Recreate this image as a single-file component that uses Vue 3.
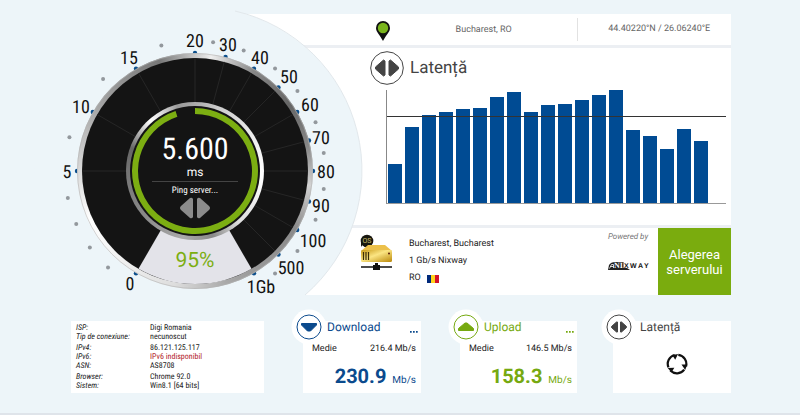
<script setup>
const CX = 195
const CY = 171

function polar(r, deg) {
  const a = (deg * Math.PI) / 180
  return [CX + r * Math.sin(a), CY - r * Math.cos(a)]
}

function sector(r0, r1, a0, a1) {
  const large = a1 - a0 > 180 ? 1 : 0
  const [p, q, s, t] = [polar(r1, a0), polar(r1, a1), polar(r0, a1), polar(r0, a0)]
  return `M${p} A${r1} ${r1} 0 ${large} 1 ${q} L${s} A${r0} ${r0} 0 ${large} 0 ${t} Z`
}

const marks = [
  { text: '0', deg: 210, x: 130, y: 283 },
  { text: '5', deg: 270, x: 67, y: 171 },
  { text: '10', deg: 300, x: 81, y: 106 },
  { text: '15', deg: 330, x: 129, y: 57 },
  { text: '20', deg: 0, x: 195, y: 40 },
  { text: '30', deg: 15, x: 228, y: 44 },
  { text: '40', deg: 30, x: 260, y: 57 },
  { text: '50', deg: 45, x: 289, y: 76 },
  { text: '60', deg: 60, x: 310, y: 104 },
  { text: '70', deg: 75, x: 321, y: 137 },
  { text: '80', deg: 90, x: 326, y: 171 },
  { text: '90', deg: 105, x: 321, y: 205 },
  { text: '100', deg: 120, x: 313, y: 240 },
  { text: '500', deg: 135, x: 291, y: 267 },
  { text: '1Gb', deg: 150, x: 261, y: 286 }
].map((m) => ({ ...m, tick: polar(118, m.deg), a: polar(69, m.deg), b: polar(113, m.deg) }))

const dots = [222, 234, 246, 258, 285, 315, 345, 8, 22, 38, 52, 68, 82, 98, 112, 128, 142].map((d) => polar(130, d))

const samples = [39, 76, 88, 91, 94, 95, 106, 111, 91, 98, 99, 103, 108, 113, 73, 67, 54, 74, 62]

const connection = [
  [['ISP:', 'Digi Romania'], ['Tip de conexiune:', 'necunoscut']],
  [['IPv4:', '86.121.125.117'], ['IPv6:', 'IPv6 indisponibil', true], ['ASN:', 'AS8708']],
  [['Browser:', 'Chrome 92.0'], ['Sistem:', 'Win8.1 [64 bits]']]
]

const results = [
  { kind: 'download', title: 'Download', avg: '216.4 Mb/s', value: '230.9' },
  { kind: 'upload', title: 'Upload', avg: '146.5 Mb/s', value: '158.3' }
]
</script>

<template>
  <main class="page">
    <section class="hero">
      <div class="panels">
        <div class="panel location">
          <svg class="pin" viewBox="0 0 14 20" width="14" height="20" aria-hidden="true">
            <path d="M7 0a7 7 0 0 0-7 7c0 4 4 7 7 13 3-6 7-9 7-13a7 7 0 0 0-7-7z" fill="#111" />
            <circle cx="7" cy="7" r="5.200" fill="#7ab51d" />
          </svg>
          <span class="city">Bucharest, RO</span>
          <span class="coords">44.40220°N / 26.06240°E</span>
        </div>

        <div class="panel latency">
          <header class="latency-head">
            <svg viewBox="0 0 34 34" width="34" height="34" aria-hidden="true">
              <circle cx="17" cy="17" r="16.300" fill="#fff" stroke="#444" />
              <path d="M15 10v14l-1.500 1-8-7v-2l8-7zM19 10v14l1.500 1 8-7v-2l-8-7z" fill="#444" stroke="#444" stroke-linejoin="round" />
            </svg>
            <h2>Latență</h2>
          </header>
          <div class="chart" role="img" aria-label="Latență">
            <span v-for="(h, i) in samples" :key="i" class="bar" :style="{ height: h + 'px' }"></span>
            <span class="average"></span>
          </div>
        </div>

        <div class="panel server">
          <svg class="server-icon" viewBox="0 0 34 38" width="34" height="38" aria-hidden="true">
            <defs>
              <linearGradient id="gold" x1="0" x2="1" y1="0" y2="1">
                <stop offset="0" stop-color="#c99a16" />
                <stop offset=".45" stop-color="#fbe583" />
                <stop offset="1" stop-color="#b98708" />
              </linearGradient>
            </defs>
            <circle cx="7" cy="7" r="6.300" fill="#17170f" />
            <path d="M1 7h4l-4 6z" fill="#17170f" />
            <text x="7" y="9" class="os">OS</text>
            <path d="M8 11h17l7 6H1z" fill="#ecc04a" />
            <rect x="1" y="16" width="31" height="12" rx="1.500" fill="url(#gold)" />
            <path d="M3.500 18v8M6 18v8M8.500 18v8" stroke="#3a2c05" stroke-width="1.200" />
            <circle cx="29" cy="19.500" r="1" fill="#5b1c08" />
            <path d="M1 33h12M20 33h12" stroke="#111" stroke-width="1.700" />
            <path d="M15 29h3v2h2v5h-7v-5h2z" fill="#111" />
          </svg>
          <div class="server-text">
            <span>Bucharest, Bucharest</span>
            <span>1 Gb/s Nixway</span>
            <span class="country">RO
              <svg viewBox="0 0 12 8" width="12" height="8" aria-hidden="true">
                <path d="M0 0h4v8H0z" fill="#00297b" /><path d="M4 0h4v8H4z" fill="#ffd21c" /><path d="M8 0h4v8H8z" fill="#d3122a" />
              </svg>
            </span>
          </div>
          <div class="sponsor">
            <em>Powered by</em>
            <svg viewBox="0 0 42 10" width="42" height="10" role="img" aria-label="Nixway">
              <path d="M1 9 2 4Q4 1 8 1h8.500v6H20l3 2z" fill="#222" />
              <path d="M2.500 7.500 4.500 3.500h2v3.500M3.500 5.500h3" fill="none" stroke="#fff" stroke-width=".8" />
              <text x="7" y="7" class="logo-a">NI</text>
              <text x="17" y="7" class="logo-b">X</text>
              <text x="23" y="7" class="logo-b">W</text>
              <text x="31" y="7" class="logo-b">A</text>
              <text x="37" y="7" class="logo-b">Y</text>
            </svg>
          </div>
          <button type="button" class="choose">Alegerea serverului</button>
        </div>
      </div>

      <svg class="dial" viewBox="34 0 330 300" width="330" height="300" role="img" aria-label="5.600 ms">
        <circle cx="198" cy="171" r="164" fill="#edf5f9" />
        <path d="M235 11A164 164 0 0 1 305 295" fill="none" stroke="#e2e8ec" />
        <g v-for="m in marks" :key="m.text">
          <circle :cx="m.tick[0]" :cy="m.tick[1]" r="2.200" fill="#0c4f8c" />
          <text class="mark" :x="m.x" :y="m.y + 7">{{ m.text }}</text>
        </g>
        <circle v-for="(d, i) in dots" :key="'d' + i" :cx="d[0]" :cy="d[1]" r="2" fill="#93989d" />
        <foreignObject x="77" y="53" width="236" height="236"><div class="ring outer"></div></foreignObject>
        <circle cx="195" cy="171" r="117.500" fill="none" stroke="#b4b4b4" stroke-width=".6" />
        <circle cx="195" cy="171" r="113" fill="#141414" />
        <line v-for="m in marks" :key="'l' + m.text" :x1="m.a[0]" :y1="m.a[1]" :x2="m.b[0]" :y2="m.b[1]" stroke="#262626" />
        <path :d="sector(60, 113, 150, 210)" fill="#e3e3e9" />
        <foreignObject x="126" y="102" width="138" height="138"><div class="ring inner"></div></foreignObject>
        <circle cx="195" cy="171" r="65" fill="#141414" />
        <path :d="sector(57, 63, 0, 342)" fill="#7cae12" />
        <text class="reading" x="195" y="159">5.600</text>
        <text class="unit" x="195" y="176">ms</text>
        <path d="M152 181.500h86" stroke="#444" />
        <text class="status" x="195" y="193">Ping server...</text>
        <path d="M193 199v18q-1 2-3 1l-9-8q-2-2 0-4l9-8q2-1 3 1zM197 199v18q1 2 3 1l9-8q2-2 0-4l-9-8q-2-1-3 1z" fill="#8b8b8b" />
        <text class="percent" x="195" y="267">95%</text>
      </svg>
    </section>

    <section class="cards">
      <div class="card info">
        <table>
          <tbody v-for="(group, g) in connection" :key="g">
            <tr v-for="row in group" :key="row[0]">
              <th scope="row">{{ row[0] }}</th>
              <td :class="{ missing: row[2] }">{{ row[1] }}</td>
            </tr>
          </tbody>
        </table>
      </div>

      <article v-for="r in results" :key="r.kind" class="card result" :class="r.kind">
        <header>
          <svg class="badge" viewBox="0 0 36 36" width="36" height="36" aria-hidden="true">
            <circle cx="18" cy="18" r="17.500" fill="#fff" />
            <circle cx="18" cy="18" r="12" fill="none" stroke="currentColor" />
            <path v-if="r.kind === 'download'" d="M10.500 14.500h15v1.500l-6 6h-3l-6-6z" class="glyph" />
            <path v-else d="M10.500 21.500h15v-2L19 14h-2l-6.500 5.500z" class="glyph" />
          </svg>
          <h3>{{ r.title }}</h3>
          <button type="button" :aria-label="r.title">
            <svg viewBox="0 0 8 2" width="8" height="2"><path d="M0 0h1.700v1.700H0zM3 0h1.700v1.700H3zM6 0h1.700v1.700H6z" fill="currentColor" /></svg>
          </button>
        </header>
        <p class="avg"><span>Medie</span><span>{{ r.avg }}</span></p>
        <p class="speed"><strong>{{ r.value }}</strong><span>Mb/s</span></p>
      </article>

      <article class="card result ping">
        <header>
          <svg class="badge" viewBox="0 0 36 36" width="36" height="36" aria-hidden="true">
            <circle cx="18" cy="18" r="17.500" fill="#fff" />
            <circle cx="18" cy="18" r="12" fill="none" stroke="currentColor" />
            <path d="M16.500 13v10h-1l-5-4.500v-1l5-4.500zM19.500 13v10h1l5-4.500v-1l-5-4.500z" class="glyph" />
          </svg>
          <h3>Latență</h3>
        </header>
        <svg class="spinner" viewBox="0 0 22 22" width="22" height="22" role="img" aria-label="Latență">
          <g v-for="a in [0, 120, 240]" :key="a" :transform="`rotate(${a} 11 11)`">
            <path d="M12.300 1.900A9.200 9.200 0 0 1 20 13.500" fill="none" stroke="#111" stroke-width="2.200" />
            <path d="M15.500 11.500 21.200 11.500 19.200 17z" fill="#111" />
          </g>
        </svg>
      </article>
    </section>
  </main>
</template>

<style>
body {
  background: #edf5f9;
}
</style>

<style scoped>
.page {
  font-family: Roboto, sans-serif;
  text-rendering: geometricPrecision;
  color: #222;
  padding-bottom: 20px;
  border-bottom: 2px solid #dfe4ea;
}
h2, h3, p {
  margin: 0;
  font-weight: 400;
}
button {
  border: 0;
  padding: 0;
  font: inherit;
  background: none;
  color: inherit;
}
.hero {
  display: grid;
  grid-template-columns: minmax(0, 1fr);
  align-items: start;
  padding: 0 69px 0 34px;
}
.hero > * {
  grid-area: 1 / 1;
}
.panels {
  display: flex;
  flex-direction: column;
  gap: 3px;
  margin: 14px 0 0 194px;
  background: #eceff3;
}
.panel {
  background: #fff;
}
.location {
  display: flex;
  align-items: center;
  height: 31px;
  padding-left: 148px;
  font-size: 9px;
  color: #666;
}
.pin {
  margin-top: 2px;
}
.city {
  flex: 188;
  text-align: center;
}
.coords {
  flex: 144;
  padding-left: 9px;
  line-height: 23px;
  text-align: center;
  border-left: 1px solid #e2e2e2;
}
.latency {
  padding: 3px 5px 21px 142px;
}
.latency-head {
  display: flex;
  align-items: center;
  gap: 6px;
  color: #444;
}
.latency-head h2 {
  font-size: 17px;
}
.chart {
  position: relative;
  display: flex;
  align-items: flex-end;
  gap: 3px;
  height: 113px;
  margin: 5px 0 0 16px;
  padding-left: 1px;
  border-left: 1px solid #888;
  border-bottom: 1px solid #999;
}
.bar {
  flex: 0 0 14px;
  background: #004b93;
}
.average {
  position: absolute;
  left: 0;
  right: 0;
  top: 26px;
  height: 1px;
  background: #333;
}
.server {
  display: flex;
  height: 67px;
  padding-left: 132px;
}
.server-icon {
  margin-top: 6px;
}
.server-text {
  display: flex;
  flex-direction: column;
  flex: 1;
  padding: 8px 0 0 15px;
  font-size: 9px;
  line-height: 17px;
}
.country {
  display: flex;
  align-items: center;
  gap: 6px;
}
.sponsor {
  display: flex;
  flex-direction: column;
  align-items: center;
  gap: 19px;
  padding: 3px 9px 0 0;
  font-size: 8px;
  line-height: 11px;
  color: #777;
}
.choose {
  width: 73px;
  background: #7aac0e;
  color: #fff;
  font-size: 13px;
  line-height: 15px;
}
.os {
  font: 7px Roboto, sans-serif;
  fill: #c9bd6a;
  text-anchor: middle;
}
.logo-a {
  font: bold 8px "Liberation Serif", serif;
  fill: #fff;
}
.logo-b {
  font: bold 7px "Liberation Sans", sans-serif;
  fill: #111;
}
.dial text {
  text-anchor: middle;
  font-family: "Roboto Condensed", "Liberation Sans Narrow", Roboto, sans-serif;
}
.dial .mark {
  font-family: "Liberation Sans Narrow", "Roboto Condensed", Roboto, sans-serif;
  font-size: 18px;
  fill: #111;
}
.dial .reading {
  font-size: 30px;
  fill: #fff;
}
.dial .unit {
  font: 12px Roboto, sans-serif;
  fill: #fff;
}
.dial .status {
  font-size: 9px;
  fill: #fff;
}
.dial .percent {
  font: 21px Roboto, sans-serif;
  fill: #7cae12;
}
.ring {
  width: 100%;
  height: 100%;
  border-radius: 50%;
}
.outer {
  background: conic-gradient(#c8c8c8, #eee 8deg, #888 30deg, #666 55deg, #888 78deg, #d2d2d2 97deg, #8a8a8a 120deg, #999 150deg, #aaa 165deg, #ddd 190deg, #eee 215deg, #fff 245deg, #ddd 268deg, #aaa 300deg, #8c8c8c 325deg, #777 342deg, #c8c8c8);
}
.inner {
  background: conic-gradient(#aaa, #ccc 20deg, #eee 60deg, #fff 95deg, #ddd 140deg, #888 165deg, #aaa 190deg, #888 230deg, #777 265deg, #666 290deg, #fff 318deg, #ddd 330deg, #999 345deg, #aaa);
}
.cards {
  display: grid;
  grid-template-columns: 193fr 39px 118fr 39px 117fr 36px 118fr;
  padding: 21px 69px 0 71px;
}
.card {
  background: #fff;
  height: 72px;
  grid-row: 1;
}
.info {
  grid-column: 1;
  padding: 2px 5px;
  box-sizing: border-box;
}
.download {
  grid-column: 3;
  color: #0b4a8d;
}
.upload {
  grid-column: 5;
  color: #76a910;
}
.ping {
  grid-column: 7;
  color: #444;
}
table {
  border-collapse: collapse;
  font: 8px/9px "Roboto Condensed", "Liberation Sans Narrow", Roboto, sans-serif;
}
th, td {
  padding: 0;
  text-align: left;
  font-weight: 400;
}
th {
  width: 74px;
  font-style: italic;
}
tbody + tbody tr:first-child > * {
  padding-top: 2px;
}
.missing {
  color: #b3242b;
}
.result header {
  display: flex;
  align-items: center;
  height: 12px;
  margin-left: -12px;
}
.badge {
  flex: none;
}
.glyph {
  fill: currentColor;
  stroke: currentColor;
  stroke-linejoin: round;
}
.result h3 {
  flex: 1;
  font-size: 12px;
}
.ping h3 {
  padding-left: 3px;
}
.result header button {
  display: flex;
  padding: 9px 3px 0 0;
}
.avg {
  display: flex;
  justify-content: space-between;
  padding: 9px 5px 0 9px;
  font-size: 9px;
  line-height: 14px;
  color: #222;
}
.speed {
  display: flex;
  justify-content: flex-end;
  align-items: baseline;
  gap: 6px;
  padding: 8px 5px 0 0;
  font-size: 10px;
  line-height: 24px;
}
.speed strong {
  font-size: 20px;
}
.spinner {
  display: block;
  margin: 20px auto 0;
  padding-left: 9px;
}
</style>
